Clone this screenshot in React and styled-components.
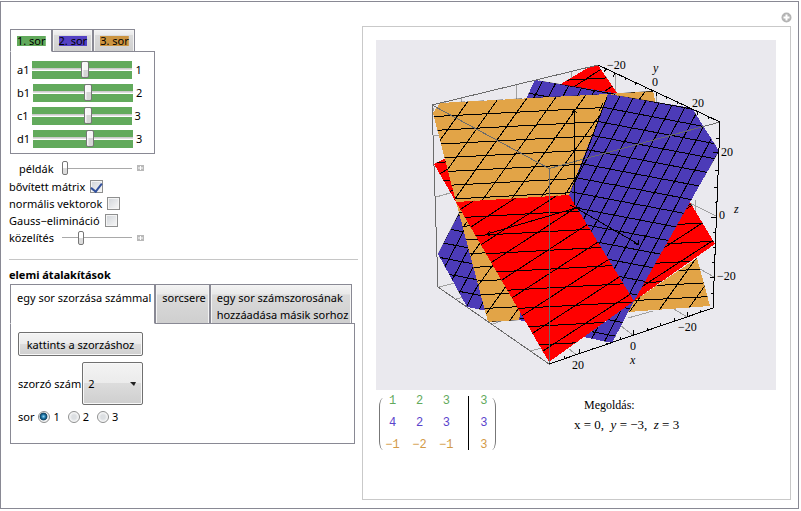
import React, { useState } from "react";
import styled, { createGlobalStyle } from "styled-components";

const GREEN = "#62aa5c";
const BLUE = "#4c3bb8";
const ORANGE = "#e2a447";
const RED = "#ff0000";
const FRAME = "#898994";

const GlobalStyle = createGlobalStyle`
  * { box-sizing: border-box; }
  body {
    margin: 1px 2px 2px 0;
    background: #fff;
    color: #000;
    font: 11px/17px "Noto Sans", "Open Sans", sans-serif;
  }
  button, input, select { font: inherit; color: inherit; margin: 0; }
`;

const Frame = styled.main`
  display: grid;
  grid-template-columns: 357px minmax(0, 1fr);
  column-gap: 4px;
  border: 1px solid ${FRAME};
  padding: 0 7px 8px 0;
`;

const Controls = styled.section`
  padding: 27px 0 0 9px;
  display: flex;
  flex-direction: column;
`;

const Tabs = styled.div`
  display: flex;
  align-items: stretch;
  margin-bottom: -1px;
`;

const Tab = styled.button`
  min-height: ${(p) => (p.$tall ? 40 : 23)}px;
  padding: ${(p) => (p.$tall ? "4px 3px 0 6px" : "0 5px 0 6px")};
  display: flex;
  align-items: ${(p) => (p.$tall ? "flex-start" : "center")};
  text-align: left;
  white-space: pre;
  border: 1px solid ${FRAME};
  border-bottom-color: ${(p) => (p.$active ? "#fff" : FRAME)};
  position: relative;
  background: ${(p) =>
    p.$active ? "#fff" : "linear-gradient(#f3f3f3, #e9e9e9 24%, #dadada 26%, #cfcfcf)"};
  box-shadow: ${(p) => (p.$active ? "none" : "inset 1px 1px #f4f4f4, inset -1px 0 #f4f4f4")};
`;

const Swatch = styled.span`
  background: linear-gradient(${(p) => p.$color}, ${(p) => p.$color}) center / 100% 10px no-repeat;
`;

const TabPanel = styled.div`
  border: 1px solid ${FRAME};
  width: ${(p) => (p.$wide ? "auto" : "145px")};
  margin-right: ${(p) => (p.$wide ? "3px" : "0")};
  min-height: ${(p) => (p.$wide ? 121 : 103)}px;
  padding: ${(p) => (p.$wide ? "8px 7px" : "6px 6px 3px")};
`;

const CoefRow = styled.label`
  display: flex;
  align-items: center;
  height: 23px;
  gap: 3px;
`;

const CoefSlider = styled.input.attrs({ type: "range" })`
  appearance: none;
  width: 100px;
  height: 18px;
  background: linear-gradient(
    ${GREEN} 7px, #d8d8d8 7px, #bdbdbd 8px, #fff 9px, #fff 10px, ${GREEN} 10px
  );
  &::-webkit-slider-thumb {
    appearance: none;
    width: 8px;
    height: 17px;
    border: 1px solid #777;
    border-radius: 2px;
    background: linear-gradient(90deg, #fff, #fff0 40%), linear-gradient(#f6f6f6 50%, #d6d6d6 50%);
  }
`;

const OptionRow = styled.div`
  display: flex;
  align-items: center;
  height: ${(p) => (p.$first ? 20 : 17)}px;
  margin-left: ${(p) => (p.$first ? 10 : 0)}px;
`;

const OptionLabel = styled.label`
  margin-right: 5px;
`;

const PlainSlider = styled.input.attrs({ type: "range" })`
  appearance: none;
  width: 70px;
  height: 15px;
  margin: 0 5px 0 3px;
  background: linear-gradient(transparent 7px, #a9a9a9 7px, #a9a9a9 8px, transparent 8px);
  &::-webkit-slider-thumb {
    appearance: none;
    width: 6px;
    height: 14px;
    border: 1px solid #777;
    border-radius: 2px;
    background: linear-gradient(#fff 50%, #dcdcdc 50%);
  }
`;

const ExpandButton = styled.button`
  display: flex;
  padding: 0;
  border: 0;
  background: none;
`;

const CheckBox = styled.input.attrs({ type: "checkbox" })`
  appearance: none;
  display: grid;
  place-items: center;
  width: 13px;
  height: 13px;
  border: 1px solid #8e8f8f;
  background: linear-gradient(135deg, #cfd3d8, #f8f8f8);
  box-shadow: inset 0 0 0 1px #f4f4f4;
  &:checked::after {
    content: "";
    width: 5px;
    height: 9px;
    border: solid #33519c;
    border-width: 0 2px 2px 0;
    transform: rotate(38deg);
  }
`;

const Heading = styled.h2`
  margin: 13px 0 1px -1px;
  padding-top: 6px;
  border-top: 1px solid #c6c6c6;
  font-size: 11px;
  line-height: 17px;
  font-weight: 700;
`;

const OptionList = styled.div`
  margin: 4px 0 0 -1px;
`;

const Line = styled.div`
  display: flex;
  align-items: center;
  gap: ${(p) => p.$gap}px;
  margin-top: ${(p) => p.$top || 0}px;
`;

const PushButton = styled.button`
  width: 125px;
  height: 24px;
  padding: 0;
  border: 1px solid #707070;
  border-radius: 2px;
  background: linear-gradient(#f3f3f3, #ebebeb 50%, #dcdcdc 50%, #cfcfcf);
  box-shadow: inset 0 0 0 1px #f8f8f8;
`;

const SelectBox = styled.span`
  display: grid;
  grid-template-columns: 1fr 12px;
  align-items: center;
  width: 61px;
  height: 43px;
  border: 1px solid #707070;
  border-radius: 2px;
  background: linear-gradient(#f3f3f3, #ebebeb 50%, #dcdcdc 50%, #cfcfcf);
  box-shadow: inset 0 0 0 1px #f8f8f8;
`;

const Select = styled.select`
  grid-column: 1 / 3;
  grid-row: 1;
  appearance: none;
  height: 41px;
  padding: 0 14px 0 5px;
  border: 0;
  background: none;
`;

const Arrow = styled.svg`
  grid-column: 2;
  grid-row: 1;
  pointer-events: none;
`;

const RadioLabel = styled.label`
  display: flex;
  align-items: center;
  gap: 3px;
  margin-right: 4px;
`;

const Radio = styled.input.attrs({ type: "radio" })`
  appearance: none;
  width: 12px;
  height: 12px;
  border: 1px solid #8e8f8f;
  border-radius: 50%;
  background: radial-gradient(#dcdfe2 30%, #fafafa 70%);
  &:checked {
    background: radial-gradient(circle at 45% 45%, #8fd3f4, #1a6f9f 28%, #12405e 45%, #f4f4f4 55%);
  }
`;

const Output = styled.section`
  display: flex;
  flex-direction: column;
`;

const MenuButton = styled.button`
  align-self: flex-end;
  display: flex;
  margin: 10px -1px 3px;
  padding: 0;
  border: 0;
  background: none;
`;

const OutputPanel = styled.div`
  flex: 1;
  border: 1px solid #c9c9c9;
  padding: 13px 14px 49px 13px;
`;

const Plot = styled.svg`
  display: block;
  width: 100%;
  background: #eae9ee;
  font: 12px "Liberation Serif", serif;
`;

const Results = styled.div`
  display: flex;
  align-items: flex-start;
  gap: 78px;
  padding: 6px 0 0 3px;
`;

const MatrixWrap = styled.div`
  display: flex;
  align-items: stretch;
`;

const Paren = styled.span`
  width: 4px;
  margin: ${(p) => (p.$right ? "2px 0 0 -3px" : "2px -4px 0 0")};
  border: solid #777;
  border-width: ${(p) => (p.$right ? "0 1px 0 0" : "0 0 0 1px")};
  border-radius: ${(p) => (p.$right ? "0 4px 4px 0 / 0 9px 9px 0" : "4px 0 0 4px / 9px 0 0 9px")};
`;

const Matrix = styled.table`
  border-collapse: collapse;
  font: 12px/10px "Liberation Mono", monospace;
`;

const MatrixRow = styled.tr`
  color: ${(p) => p.$color};
`;

const Cell = styled.td`
  min-width: 27px;
  padding: ${(p) => (p.$first ? 0 : 12)}px ${(p) => (p.$bar ? 8 : 0)}px 0 ${(p) => (p.$last ? 4 : 0)}px;
  width: ${(p) => (p.$bar ? 35 : 27)}px;
  text-align: center;
  border-right: ${(p) => (p.$bar ? "1px solid #000" : "0")};
`;

const Solution = styled.div`
  font: 12px/19px "Liberation Serif", serif;
`;

const SolutionTitle = styled.div`
  margin-left: 10px;
`;

const Equation = styled.div`
  font-size: 13px;
`;

const MESH = {
  orange: [
    { x: 520, y: 112, step: 13.9, slope: -0.053 },
    { x: 496.5, y: 101, step: 39.7, slope: -1.4 },
  ],
  blue: [
    { x: 604, y: 107.5, step: 15.1, slope: 0.19 },
    { x: 620, y: 96, step: 27, slope: -1.9 },
  ],
  red: [
    { x: 549, y: 231.5, step: 18.8, slope: -0.055 },
    { x: 549, y: 225, step: 24.4, slope: -0.65 },
  ],
};

const FILL = { orange: ORANGE, blue: BLUE, red: RED };

const FACETS = [
  ["red", "561,84 591,66 598,65 617,93 590,97"],
  ["blue", "535,80 614,93 607,100 526,99"],
  ["orange", "608,94 653,91 656,104 620,100"],
  ["red", "434,164 446,158 457,204"],
  ["blue", "459,213 438,254 467,307 488,311"],
  ["orange", "455,198 488,322 519,320 525,310 460,200"],
  ["blue", "521,311 519,320 528,322"],
  ["red", "690,202 715,244 634,301"],
  ["orange", "697,258 710,306 628,312 634,301"],
  ["blue", "634,301 612,343 584,337"],
  ["orange", "440,103 433,113 456,202 570,195 608,94"],
  ["blue", "608,94 692,108 719,151 634,301 569,195"],
  ["red", "456,202 569,195 634,301 549,362"],
];

const MESH_COUNT = 36;

function Facet({ id, kind, points }) {
  const d = MESH[kind]
    .map(({ x, y, step, slope }) =>
      Array.from({ length: MESH_COUNT }, (_, i) => {
        const base = y + (i - MESH_COUNT / 2) * step;
        return `M400 ${base + (400 - x) * slope}L750 ${base + (750 - x) * slope}`;
      }).join("")
    )
    .join("");
  return (
    <g>
      <clipPath id={id}>
        <polygon points={points} />
      </clipPath>
      <polygon points={points} fill={FILL[kind]} />
      <path d={d} stroke="#000" fill="none" clipPath={`url(#${id})`} />
    </g>
  );
}

function PlanesPlot() {
  return (
    <Plot viewBox="376 40 400 350" role="img" aria-label="x, y, z">
      <g shapeRendering="crispEdges" fill="none">
        <path
          stroke="#a0a0a0"
          d="M461 98v6M516 85v16M571 72v10M615 73v20M656 92v12M433 135h6M436 197l14-4M439 287l16-4M456 299l8-2M493 324l8-3M530 351l20-5M569 349l8 6M633 335l-12-9M687 317l-13-8M716 216l-26-13M714 277l-14-8M695 200v12M628 318l25-7M432 105l4 12"
        />
        {FACETS.map(([kind, points], i) => (
          <Facet key={i} id={`facet-${i}`} kind={kind} points={points} />
        ))}
        <path
          stroke="#6b6b6b"
          d="M598 65L432 105L549 168.500V364L438 287L432 105M549 168.500L720 122"
        />
        <path
          stroke="#000"
          d="M598 65L720 122L713 308L549 364M574.500 205V110M572 113l2-3 3 3M576 208L487 234M490 231l-3 3 3 2M576 208L638 244M634 243l4 2 1-5M565 195L579 172M579 172L607 97M603 103l-4 8M570 205l6 3 4-1"
        />
        <path
          stroke="#000"
          d="M606 69l-2 3M615 73l-2 4M625 78v2M635 83v2M645 87v2M656 92v4M666 96v3M677 101v3M687 106v3M697 111v4M708 116v3M719 138h-3M718 152h-5M718 170h-3M717 187h-3M717 202h-2M716 217h-5M715 232h-2M715 247h-2M714 262h-2M714 277h-4M713 293h-2M564 359v-3M579 354v-5M592 350v-2M606 345v-2M620 340v-3M633 335v-5M647 331v-3M660 326v-3M674 321v-3M687 317v-5M700 312v-2"
        />
      </g>
      <text x="607" y="69">−20</text>
      <text x="652" y="86">0</text>
      <text x="692" y="107">20</text>
      <text x="653" y="72" fontStyle="italic">y</text>
      <text x="721" y="156">20</text>
      <text x="719" y="219">0</text>
      <text x="717" y="280">−20</text>
      <text x="734" y="213" fontStyle="italic">z</text>
      <text x="678" y="331">−20</text>
      <text x="630" y="350">0</text>
      <text x="572" y="369">20</text>
      <text x="630" y="364" fontStyle="italic">x</text>
    </Plot>
  );
}

function Expand() {
  return (
    <ExpandButton type="button" aria-label="+">
      <svg width="8" height="8" viewBox="0 0 8 8">
        <rect width="7" height="6" y="1" fill="#b9b9b9" />
        <path d="M1 4h5M3.500 2v4" stroke="#fff" />
      </svg>
    </ExpandButton>
  );
}

const ROW_TABS = [
  { label: "1. sor", color: GREEN },
  { label: "2. sor", color: "#5442c4" },
  { label: "3. sor", color: "#cb9440" },
];

const OPERATIONS = [
  "egy sor szorzása számmal",
  "sorcsere",
  "egy sor számszorosának\nhozzáadása másik sorhoz",
];

const MATRIX = [
  { color: "#62aa5c", values: ["1", "2", "3", "3"] },
  { color: "#5a43cc", values: ["4", "2", "3", "3"] },
  { color: "#d39a47", values: ["−1", "−2", "−1", "3"] },
];

export default function App() {
  const [rowTab, setRowTab] = useState(0);
  const [operation, setOperation] = useState(0);
  const [coefs, setCoefs] = useState({ a1: 1, b1: 2, c1: 3, d1: 3 });

  return (
    <>
      <GlobalStyle />
      <Frame>
        <Controls>
          <Tabs role="tablist">
            {ROW_TABS.map((tab, i) => (
              <Tab
                key={tab.label}
                type="button"
                role="tab"
                aria-selected={rowTab === i}
                $active={rowTab === i}
                onClick={() => setRowTab(i)}
              >
                <Swatch $color={tab.color}>{tab.label}</Swatch>
              </Tab>
            ))}
          </Tabs>
          <TabPanel role="tabpanel">
            {Object.entries(coefs).map(([name, value]) => (
              <CoefRow key={name}>
                {name}
                <CoefSlider
                  min="-20"
                  max="20"
                  value={value}
                  onChange={(e) => setCoefs({ ...coefs, [name]: Number(e.target.value) })}
                />
                {value}
              </CoefRow>
            ))}
          </TabPanel>

          <OptionList>
            <OptionRow $first>
              <OptionLabel htmlFor="examples">példák</OptionLabel>
              <PlainSlider id="examples" min="0" max="10" defaultValue="0" />
              <Expand />
            </OptionRow>
            <OptionRow>
              <OptionLabel htmlFor="augmented">bővített mátrix</OptionLabel>
              <CheckBox id="augmented" defaultChecked />
            </OptionRow>
            <OptionRow>
              <OptionLabel htmlFor="normals">normális vektorok</OptionLabel>
              <CheckBox id="normals" />
            </OptionRow>
            <OptionRow>
              <OptionLabel htmlFor="gauss">Gauss−elimináció</OptionLabel>
              <CheckBox id="gauss" />
            </OptionRow>
            <OptionRow>
              <OptionLabel htmlFor="zoom">közelítés</OptionLabel>
              <PlainSlider id="zoom" min="0" max="100" defaultValue="25" />
              <Expand />
            </OptionRow>
          </OptionList>

          <Heading>elemi átalakítások</Heading>
          <Tabs role="tablist">
            {OPERATIONS.map((label, i) => (
              <Tab
                key={label}
                type="button"
                role="tab"
                aria-selected={operation === i}
                $active={operation === i}
                $tall
                onClick={() => setOperation(i)}
              >
                {label}
              </Tab>
            ))}
          </Tabs>
          <TabPanel role="tabpanel" $wide>
            <PushButton type="button">kattints a szorzáshoz</PushButton>
            <Line $top={6} $gap={1}>
              <label htmlFor="factor">szorzó szám</label>
              <SelectBox>
                <Select id="factor" defaultValue="2">
                  <option>2</option>
                  <option>3</option>
                  <option>4</option>
                </Select>
                <Arrow width="6" height="4" viewBox="0 0 6 4">
                  <path d="M0 0h6L4 4z" fill="#222" />
                </Arrow>
              </SelectBox>
            </Line>
            <Line $top={3} $gap={4} role="radiogroup" aria-label="sor">
              sor
              {["1", "2", "3"].map((n) => (
                <RadioLabel key={n}>
                  <Radio name="row" value={n} defaultChecked={n === "1"} />
                  {n}
                </RadioLabel>
              ))}
            </Line>
          </TabPanel>
        </Controls>

        <Output>
          <MenuButton type="button" aria-label="+">
            <svg width="11" height="11" viewBox="0 0 11 11">
              <circle cx="5.500" cy="5.500" r="5" fill="#b4b4b4" />
              <path d="M2.500 5.500h6M5.500 2.500v6" stroke="#fff" strokeWidth="2" />
            </svg>
          </MenuButton>
          <OutputPanel>
            <PlanesPlot />
            <Results>
              <MatrixWrap>
                <Paren />
                <Matrix>
                  <tbody>
                    {MATRIX.map(({ color, values }, r) => (
                      <MatrixRow key={color} $color={color}>
                        {values.map((v, c) => (
                          <Cell key={c} $first={r === 0} $bar={c === 2} $last={c === 3}>
                            {v}
                          </Cell>
                        ))}
                      </MatrixRow>
                    ))}
                  </tbody>
                </Matrix>
                <Paren $right />
              </MatrixWrap>
              <Solution>
                <SolutionTitle>Megoldás:</SolutionTitle>
                <Equation>
                  x = 0,&nbsp; <i>y</i> = −3,&nbsp; <i>z</i> = 3
                </Equation>
              </Solution>
            </Results>
          </OutputPanel>
        </Output>
      </Frame>
    </>
  );
}
